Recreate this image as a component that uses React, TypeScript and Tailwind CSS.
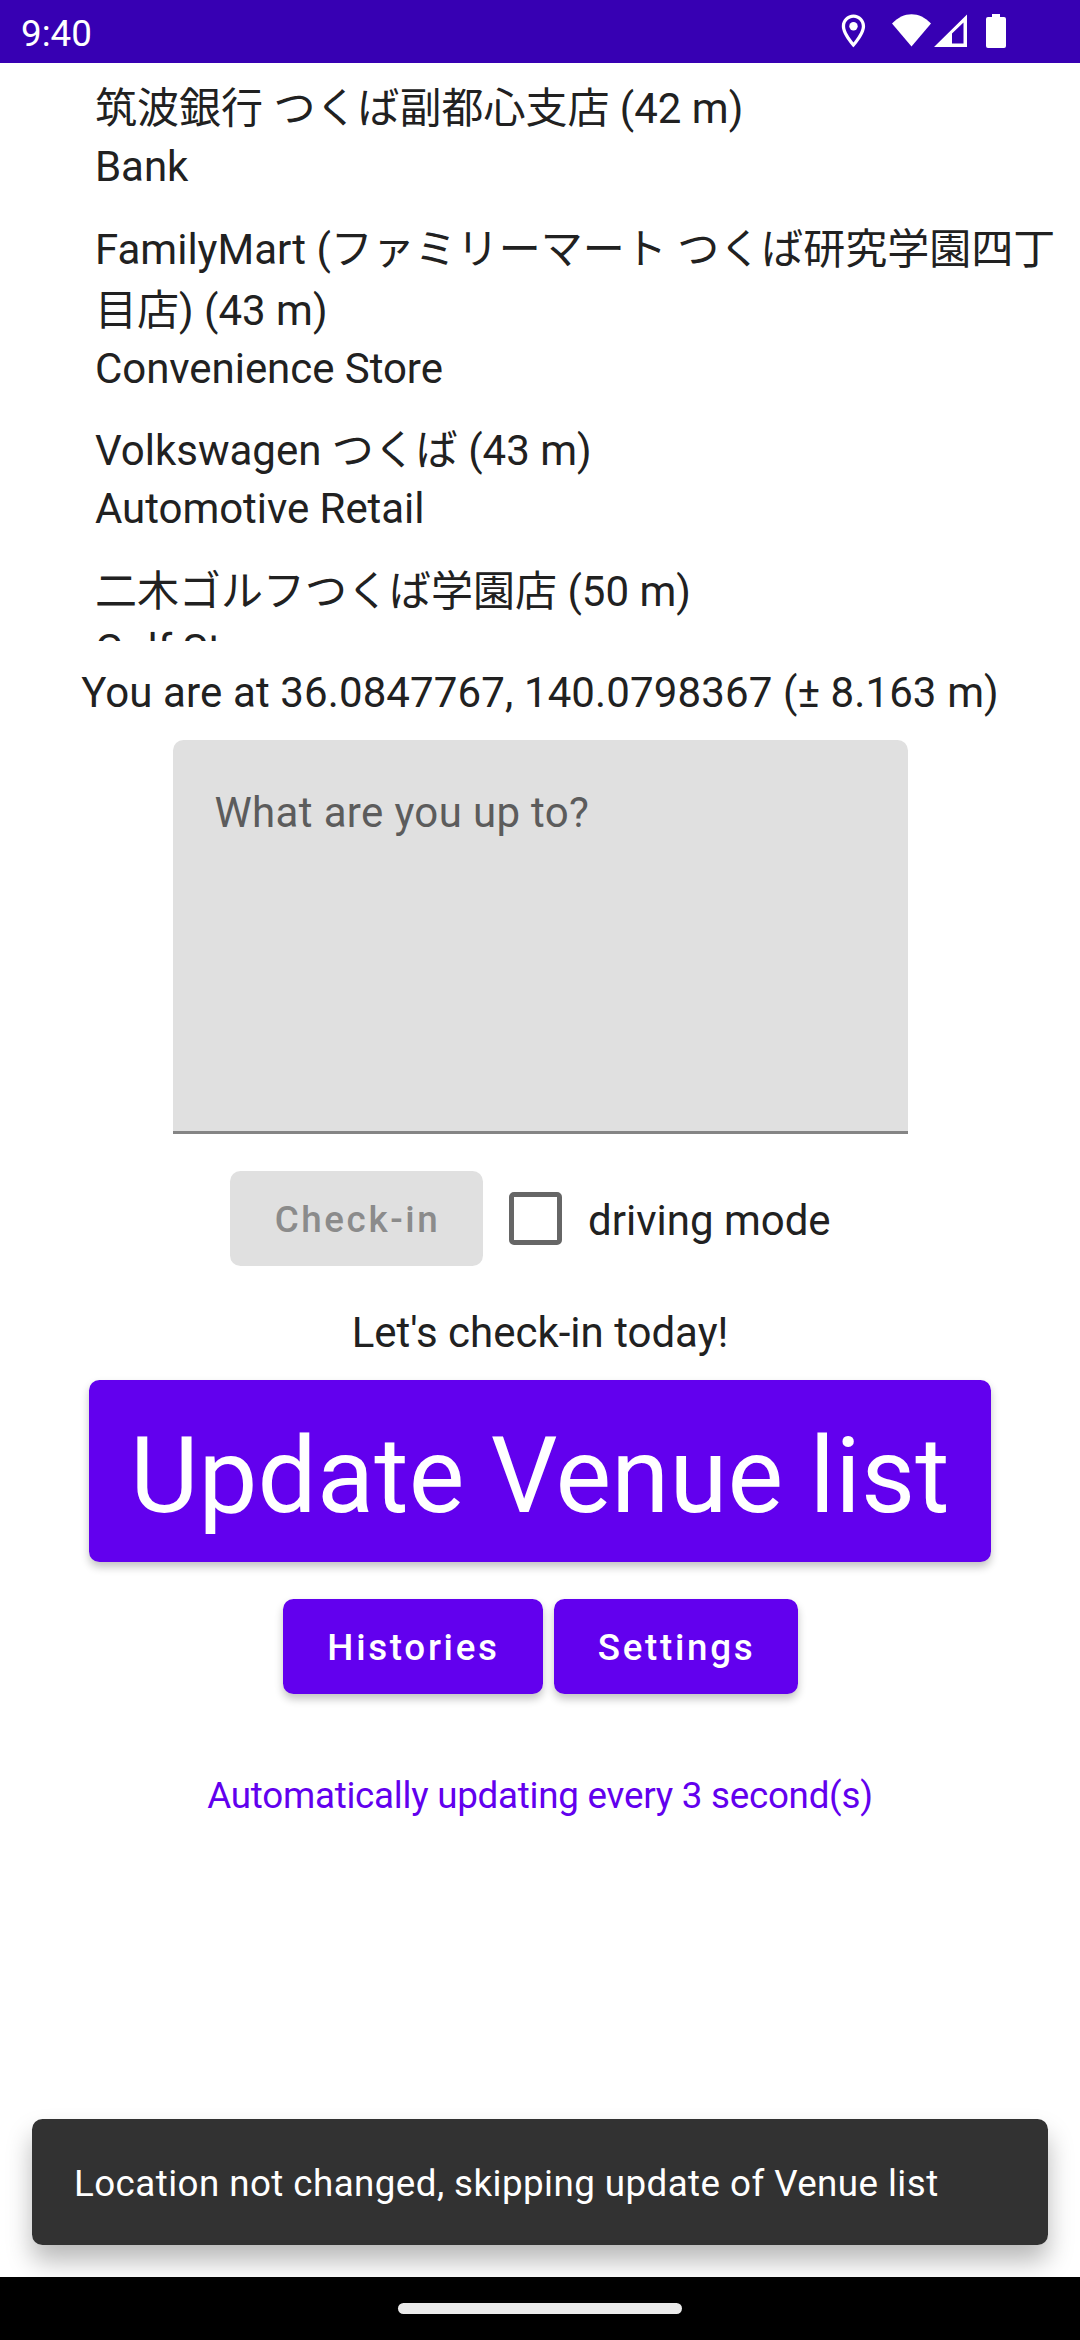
import React from "react";

const venues = [
  { name: "筑波銀行 つくば副都心支店 (42 m)", category: "Bank" },
  { name: "FamilyMart (ファミリーマート つくば研究学園四丁目店) (43 m)", category: "Convenience Store" },
  { name: "Volkswagen つくば (43 m)", category: "Automotive Retail" },
  { name: "二木ゴルフつくば学園店 (50 m)", category: "Golf Store" },
];

function StatusBar() {
  return (
    <header className="flex h-[63px] shrink-0 items-center justify-between bg-[#3700b3] pl-[21px] pr-[72px] text-white">
      <span className="pt-[4px] text-[36.75px] leading-[44px]">9:40</span>
      <svg className="h-[63px] w-[170px]" viewBox="838 0 170 63" fill="#fff">
        <path
          fillRule="evenodd"
          d="M853.5 14.5C847 14.5 841.8 19.700 841.8 26.200C841.8 34.800 853.5 47.300 853.5 47.300S865.100 34.800 865.100 26.200C865.100 19.700 859.900 14.500 853.5 14.500ZM853.5 17.800C858.100 17.800 861.800 21.500 861.800 26.200C861.800 31 857 38.200 853.5 42.500C850 38.200 845.100 31 845.100 26.200C845.100 21.500 848.800 17.800 853.5 17.800Z"
        />
        <circle cx="853.5" cy="26.300" r="4.200" />
        <path d="M892 23.500C903.500 11 919.500 11 931 23.500L911.500 46.500Z" />
        <path fillRule="evenodd" d="M934 47L967 14.500V47ZM952 33.500V43.500H963.500V22.500Z" />
        <path d="M992 14H1000V17H1004Q1006 17 1006 19V46Q1006 48 1004 48H988Q986 48 986 46V19Q986 17 988 17H992Z" />
      </svg>
    </header>
  );
}

const contained =
  "flex items-center justify-center rounded-[10.5px] bg-[#6200ee] text-white shadow-[0_5px_8px_rgba(0,0,0,0.24)]";

export default function App() {
  return (
    <div lang="ja" className="flex h-[2340px] w-[1080px] flex-col overflow-hidden bg-white font-[Roboto,'Noto_Sans_CJK_JP',sans-serif] text-[42px] text-[#212121]">
      <StatusBar />
      <main className="flex flex-1 flex-col items-center">
        <ul className="flex h-[578px] w-full flex-col gap-[24.6px] overflow-hidden pl-[95px] pr-[21px] pt-[15px]">
          {venues.map((v) => (
            <li key={v.name} className="shrink-0">
              <p className="leading-[61px]">{v.name}</p>
              <p className="leading-[55px] tracking-[-0.05px]">{v.category}</p>
            </li>
          ))}
        </ul>
        <p className="mt-[22px] leading-[60px] tracking-[0.12px]">You are at 36.0847767, 140.0798367 (± 8.163 m)</p>
        <div className="mt-[17px] h-[394px] w-[735px] rounded-t-[10.5px] border-b-3 border-[#858585] bg-[#e0e0e0] px-[42px] pt-[43px]">
          <p className="leading-[60px] tracking-[0.35px] text-[#5c5c5c]">What are you up to?</p>
        </div>
        <div className="mt-[37px] flex h-[95px] w-[620px] items-center">
          <button className="h-[95px] w-[253px] rounded-[10.5px] bg-[#e0e0e0] pl-[2px] pt-[3px] text-[36.75px] font-medium tracking-[2.6px] text-[#8b8b8b]">Check-in</button>
          <span className="ml-[26px] size-[53px] rounded-[5px] border-5 border-[#666]" />
          <span className="ml-[26px] pt-[4px] leading-[60px]">driving mode</span>
        </div>
        <p className="mt-[37px] leading-[60px]">Let's check-in today!</p>
        <button className={`${contained} mt-[17px] h-[182px] w-[902px] pt-[10px] text-[105px] leading-[123px] tracking-[0.15px]`}>Update Venue list</button>
        <div className="mt-[37px] flex gap-[11px] text-[36.75px] font-medium tracking-[2.7px]">
          <button className={`${contained} h-[95px] w-[260px] pl-[2px] pt-[3px]`}>Histories</button>
          <button className={`${contained} h-[95px] w-[244px] pl-[2px] pt-[3px]`}>Settings</button>
        </div>
        <p className="mt-[72px] text-[36.75px] leading-[60px] tracking-[-0.25px] text-[#6200ee]">Automatically updating every 3 second(s)</p>
        <div className="mb-8 mt-auto flex h-[126px] w-[1016px] items-center rounded-[10.5px] bg-[#323232] px-[42px] pt-[3px] text-[36.75px] tracking-[0.43px] text-white shadow-[0_16px_26px_rgba(0,0,0,0.28)]">
          Location not changed, skipping update of Venue list
        </div>
      </main>
      <footer className="z-10 flex h-[63px] shrink-0 justify-center bg-black pt-[26px]">
        <div className="h-[11px] w-[284px] rounded-full bg-[#ebebeb]" />
      </footer>
    </div>
  );
}
